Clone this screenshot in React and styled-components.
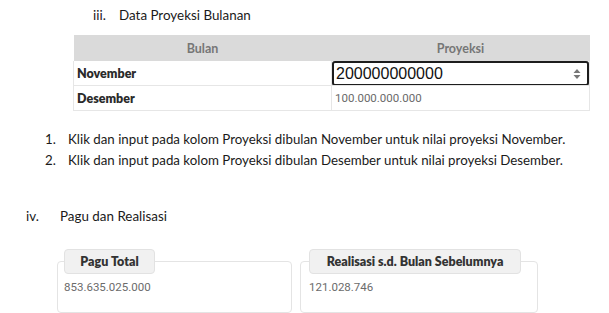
import React from "react";
import styled, { createGlobalStyle } from "styled-components";

const Global = createGlobalStyle`
  html, body { margin: 0; padding: 0; background: #fff; }
  body { font-family: Lato, "Open Sans", sans-serif; color: #111; }
`;

const Page = styled.div`
  width: 609px;
  height: 313px;
  overflow: hidden;
  padding-top: 6px;
  box-sizing: border-box;
`;

const Heading = styled.div`
  display: flex;
  align-items: baseline;
  padding-left: ${(p) => p.$indent}px;
  font-size: 13.4px;
  line-height: 18px;
  color: #1a1a1a;
  margin-top: ${(p) => p.$top || 0}px;
`;

const Marker = styled.span`
  width: ${(p) => p.$w}px;
  flex: none;
`;

const Table = styled.table`
  margin: 11px 0 0 73px;
  width: 517px;
  border-collapse: collapse;
  table-layout: fixed;
  font-size: 12px;
`;

const Th = styled.th`
  height: 26px;
  padding: 0;
  background: #dadada;
  color: #767676;
  font-weight: 700;
  text-align: center;
  font-size: 12.5px;
`;

const Td = styled.td`
  height: 24px;
  padding: 0 3px;
  border: 1px solid #e6e6e6;
  border-top: none;
  font-weight: ${(p) => (p.$bold ? 800 : 400)};
  color: ${(p) => (p.$bold ? "#2a2a2a" : "#6a6a6a")};
  font-family: ${(p) => (p.$bold ? "Lato, sans-serif" : "Roboto, sans-serif")};
  font-size: ${(p) => (p.$bold ? 12.5 : 11.5)}px;
  ${(p) => p.$input && "padding: 0;"}
`;

const InputBox = styled.div`
  display: flex;
  align-items: center;
  justify-content: space-between;
  height: 25px;
  box-sizing: border-box;
  margin: 0 0 -1px 0;
  border: 2px solid #1d1d1d;
  border-radius: 3px;
  padding: 0 6px 0 2px;
  font-family: "Liberation Sans", Arial, sans-serif;
  font-size: 16px;
  color: #111;
  background: #fff;
`;

const List = styled.ol`
  margin: 18px 0 0 0;
  padding: 0 0 0 45px;
  list-style: none;
  font-size: 13.3px;
  line-height: 21px;
  color: #1a1a1a;
`;

const Item = styled.li`
  display: flex;
`;

const Num = styled.span`
  width: 23px;
  flex: none;
`;

const Cards = styled.div`
  display: flex;
  gap: 8px;
  margin: 24px 0 0 57px;
`;

const Card = styled.fieldset`
  margin: 0;
  width: ${(p) => p.$w}px;
  box-sizing: border-box;
  border: 1px solid #e4e4e4;
  border-radius: 4px;
  padding: 0 6px 18px ${(p) => p.$pad}px;
  min-width: 0;
`;

const Label = styled.legend`
  padding: 0;
  height: 25px;
  box-sizing: border-box;
  width: ${(p) => p.$w}px;
  display: flex;
  align-items: center;
  justify-content: center;
  background: #f1f1f1;
  border: 1px solid #e2e2e2;
  border-radius: 4px;
  font-weight: 800;
  font-size: 12.5px;
  color: #333;
`;

const Value = styled.div`
  font-family: Roboto, sans-serif;
  font-size: 11.5px;
  line-height: 14px;
  color: #6b6b6b;
  margin-top: 6px;
`;

function Stepper() {
  return (
    <svg width="8" height="12" viewBox="0 0 8 12">
      <path d="M4 1 L7.5 5 H0.5 Z" fill="#777" />
      <path d="M4 11 L7.5 7 H0.5 Z" fill="#777" />
    </svg>
  );
}

export default function App() {
  return (
    <Page>
      <Global />
      <Heading $indent={93}>
        <Marker $w={26}>iii.</Marker>
        Data Proyeksi Bulanan
      </Heading>
      <Table>
        <thead>
          <tr>
            <Th>Bulan</Th>
            <Th>Proyeksi</Th>
          </tr>
        </thead>
        <tbody>
          <tr>
            <Td $bold>November</Td>
            <Td $input>
              <InputBox>
                200000000000
                <Stepper />
              </InputBox>
            </Td>
          </tr>
          <tr>
            <Td $bold>Desember</Td>
            <Td>100.000.000.000</Td>
          </tr>
        </tbody>
      </Table>
      <List>
        <Item>
          <Num>1.</Num>
          Klik dan input pada kolom Proyeksi dibulan November untuk nilai proyeksi November.
        </Item>
        <Item>
          <Num>2.</Num>
          Klik dan input pada kolom Proyeksi dibulan Desember untuk nilai proyeksi Desember.
        </Item>
      </List>
      <Heading $indent={26} $top={36}>
        <Marker $w={34}>iv.</Marker>
        Pagu dan Realisasi
      </Heading>
      <Cards>
        <Card $w={235} $pad={6}>
          <Label $w={91}>Pagu Total</Label>
          <Value>853.635.025.000</Value>
        </Card>
        <Card $w={238} $pad={8}>
          <Label $w={212}>Realisasi s.d. Bulan Sebelumnya</Label>
          <Value>121.028.746</Value>
        </Card>
      </Cards>
    </Page>
  );
}
